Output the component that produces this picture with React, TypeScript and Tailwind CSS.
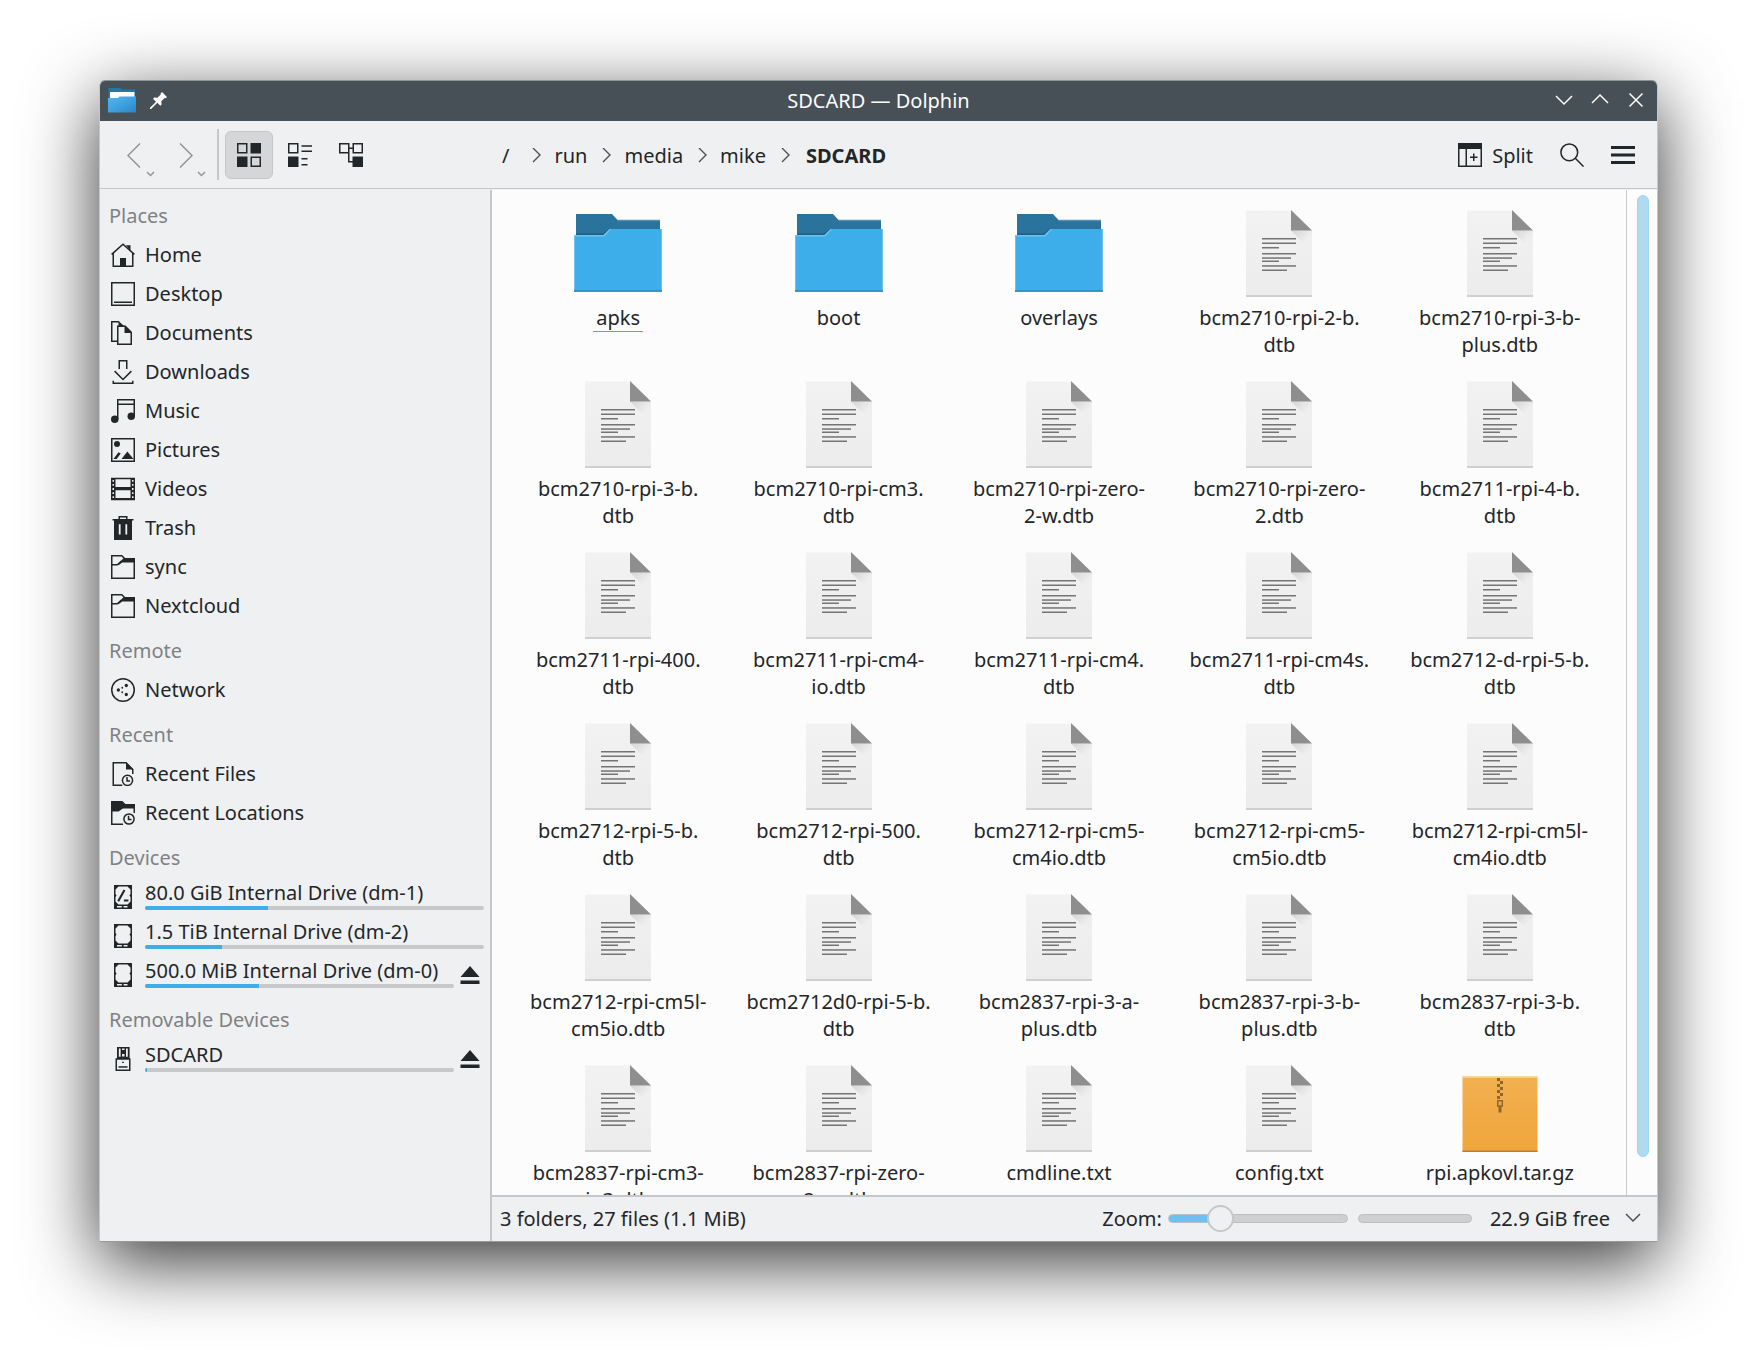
import type { ReactNode } from 'react';

type Place = {
  label: string;
  icon: ReactNode;
  usage?: number;
  ejectable?: boolean;
};

type PlaceGroup = {
  title: string;
  items: Place[];
};

type FileItem = {
  name: string;
  kind: 'folder' | 'text' | 'archive';
  current?: boolean;
};

const Glyph = ({ children }: { children: ReactNode }) => (
  <svg viewBox="0 0 16 16" className="size-6 shrink-0 fill-none stroke-[#232629]" aria-hidden="true">
    {children}
  </svg>
);

const solid = 'fill-[#232629] stroke-none';
const paper = 'fill-[#eff0f1] stroke-none';

const HomeIcon = () => (
  <Glyph>
    <path d="M.4 7.6 8 .8l7.6 6.8M1.5 6.6v8.9h13V6.6" />
    <path className={solid} d="M6 10h4v5.5H6zM10 1.5h3V5z" />
  </Glyph>
);

const DesktopIcon = () => (
  <Glyph>
    <path d="M.5.5h15v15H.5zM2 13.5h12" />
  </Glyph>
);

const DocumentsIcon = () => (
  <Glyph>
    <path d="M4.5 13.5h-4V.5h5M4.5 3.5h5l4 4v8h-9z" />
    <path className={solid} d="M5 0l4.5 4H5zM9 3l5 5H9z" />
  </Glyph>
);

const DownloadsIcon = () => (
  <Glyph>
    <path d="M5.5 6V.5h5V6M2.4 7.4 8 13l5.6-5.6M1.5 13.8v1.7h13v-1.7" />
  </Glyph>
);

const MusicIcon = () => (
  <Glyph>
    <path d="M4.5 13.5V.5h11v11M4.5 3.5h11" />
    <circle className={solid} cx="2.5" cy="13.5" r="2.5" />
    <circle className={solid} cx="13.5" cy="11.5" r="2.5" />
  </Glyph>
);

const PicturesIcon = () => (
  <Glyph>
    <path d="M.5.5h15v15H.5z" />
    <circle className={solid} cx="4" cy="4" r="2" />
    <path className={solid} d="M7 14l3.9-5L15 14zM1.6 14l3.4-4.5 1.5.8L3.8 14z" />
  </Glyph>
);

const VideosIcon = () => (
  <Glyph>
    <path className={solid} d="M0 .5h16v15H0z" />
    <path className={paper} d="M3 1.5h10v5.2H3zM3 8.8h10v5.2H3z" />
    <path className="stroke-[#eff0f1]" strokeDasharray="1.2 1.5" d="M1.5 2v13M14.5 2v13" />
  </Glyph>
);

const TrashIcon = () => (
  <Glyph>
    <path d="M5.5 2.5v-2h5v2M1 2.5h14" />
    <path className={solid} d="M2 2.5h12V16H2z" />
    <path className={paper} d="M5.2 5.5h1.2v6.8H5.2zM9.6 5.5h1.2v6.8H9.6z" />
  </Glyph>
);

const FolderIcon = () => (
  <Glyph>
    <path d="M.5.5h6.7l2 2h6.3v13H.5zM.5 6.5h3.7L7 4" />
    <path className={solid} d="M8.5 2H16v3H7.5L5 6.8 4.5 6z" />
  </Glyph>
);

const NetworkIcon = () => (
  <Glyph>
    <circle cx="8" cy="8" r="7.5" />
    <g className={solid}>
      <circle cx="4.9" cy="8" r="1.1" />
      <circle cx="10.2" cy="5" r="1.1" />
      <circle cx="10.2" cy="11" r="1.1" />
      <circle cx="7.5" cy="6.5" r=".6" />
      <circle cx="7.5" cy="9.5" r=".6" />
    </g>
  </Glyph>
);

const RecentFilesIcon = () => (
  <Glyph>
    <path d="M7.5 15.5h-6V.5H10l4.5 4.5v3" />
    <path className={solid} d="M10 0l5 5h-5z" />
    <circle cx="11" cy="12.2" r="3.4" />
    <path d="M10.7 10v2.6h2" />
  </Glyph>
);

const RecentLocationsIcon = () => (
  <Glyph>
    <path d="M8 15.5H.5V.5M15.5 3v5" />
    <path className={solid} d="M0 0h7.6l2 2H16v3H8L5 7H0z" />
    <circle cx="12" cy="12" r="3.4" />
    <path d="M11.7 9.8v2.6h2" />
  </Glyph>
);

const DriveIcon = ({ root = false }: { root?: boolean }) => (
  <Glyph>
    <path className={solid} d="M2 0h12v16H2z" />
    <path className={paper} d="M5 1h6l2 2v3l-.7 1 .7 1v3l-2 2H5l-2-2V8l.7-1L3 6V3z" />
    <path className={paper} d="M4 14h3.2v1H4zM8.4 14h2.6v1H8.4z" />
    {root && <path className="stroke-[1.4]" d="M4.8 10.8 9 3.4M8.6 10.3h3" />}
  </Glyph>
);

const UsbIcon = () => (
  <Glyph>
    <path className={solid} d="M4 0h8.4v8H4z" />
    <path className={paper} d="M5.2 1h1.2v5.5H5.2zM10 1h1.2v5.5H10zM7.4 4.6h1.6v1.8H7.4zM7.4 1h1.6v1H7.4z" />
    <path className="fill-[#eff0f1]" d="M3.5 8h9v7.5h-9z" />
    <path d="M5 13.3h6" />
    <path className={solid} d="M7.4 9.8h1.2v.8H7.4z" />
  </Glyph>
);

const EjectIcon = () => (
  <svg viewBox="0 0 20 20" className="size-5 fill-[#232629]" aria-hidden="true">
    <path d="M10 1l9.5 11H.5zM.5 15.5h19V19H.5z" />
  </svg>
);

const FolderPicture = () => (
  <svg viewBox="0 0 96 96" className="size-24" aria-hidden="true">
    <path className="fill-[#29739d]" d="M6 8h36l5.500 6H90v20H6z" />
    <path className="fill-[#5392b5]" d="M46.500 13.800H90v1.500H48z" />
    <path className="fill-[#205e83]" d="M6 27.500h27l6-5v7H6z" />
    <path className="fill-[#3daee9]" d="M4 29h29.500l6-6H92v62.700H4z" />
    <path className="fill-[#6fc2ee]" d="M4 29h29.500l6-6H41l-6.500 7.500H5v54H4zM91 23h1v61.500h-1z" />
    <path className="fill-[#2f89ba]" d="M4 84.300h88v1.500H4z" />
  </svg>
);

const textLines = [
  [32, 34],
  [36.5, 34],
  [41, 17],
  [47, 34],
  [51.3, 29],
  [54.5, 17],
  [59.2, 34],
  [63.5, 25],
];

const TextPicture = () => (
  <svg viewBox="0 0 96 96" className="size-24" aria-hidden="true">
    <defs>
      <linearGradient id="sheet" x1="0" y1="0" x2="0" y2="1">
        <stop offset="0" stopColor="#f2f2f2" />
        <stop offset="1" stopColor="#ececec" />
      </linearGradient>
      <linearGradient id="fold-shade" x1="0" y1="0" x2="1" y2="1">
        <stop offset="0" stopColor="#d4d4d4" />
        <stop offset=".6" stopColor="#efefef" />
      </linearGradient>
    </defs>
    <path fill="url(#sheet)" d="M15 4.500h45l21 21V91H15z" />
    <path fill="url(#fold-shade)" d="M60 24.500h21v21z" />
    <path className="fill-[#8e8e8e]" d="M60 4l21 20.500H60z" />
    <path className="fill-[#c6c6c6]" d="M15 89.300h66v1.500H15z" />
    {textLines.map(([y, width]) => (
      <rect key={y} className="fill-[#747474]" x="31" y={y} width={width} height="1.5" />
    ))}
  </svg>
);

const ArchivePicture = () => (
  <svg viewBox="0 0 96 96" className="size-24" aria-hidden="true">
    <defs>
      <linearGradient id="box" x1="0" y1="0" x2="0" y2="1">
        <stop offset="0" stopColor="#f2b050" />
        <stop offset="1" stopColor="#efa63b" />
      </linearGradient>
    </defs>
    <path fill="url(#box)" d="M10.500 15h75v76h-75z" />
    <path className="fill-[#f9d7a6]" d="M10.500 15h75v1.800h-75z" />
    <path className="fill-[#b57d2c]" d="M10.500 89.500h75V91h-75z" />
    <path
      className="fill-[#8d672f]"
      d="M45 17h3v3h-3zM48 20h3v3h-3zM45 23h3v3h-3zM48 26h3v3h-3zM45 29h3v3h-3zM48 32h3v3h-3zM45 35h3v3h-3z"
    />
    <path className="fill-none stroke-[#8d672f] stroke-[1.5]" d="M45.800 39.800h4.500V45h-4.500z" />
    <path className="fill-[#8d672f]" d="M46.500 45h3v6.500h-3z" />
  </svg>
);

const AppIcon = () => (
  <svg viewBox="0 0 28 26" className="h-[26px] w-7" aria-hidden="true">
    <defs>
      <linearGradient id="app-folder" x1="0" y1="0" x2="1" y2="1">
        <stop offset="0" stopColor="#4fb8f2" />
        <stop offset=".6" stopColor="#3a9ddb" />
        <stop offset="1" stopColor="#2d84bd" />
      </linearGradient>
    </defs>
    <path className="fill-[#2378a8]" d="M.500 1h12l1.500 1.500h13V14H.500z" />
    <path className="fill-[#fcfcfc]" d="M2 5h24.500v6H2z" />
    <path fill="url(#app-folder)" d="M0 11h10l1.500-1.500H28V25.500H0z" />
  </svg>
);

const PinIcon = () => (
  <svg viewBox="0 0 17 17" className="size-[17px] fill-[#fcfcfc]" aria-hidden="true">
    <path d="M12 0l5 5-1.500 1.200-.8-.3-3.400 3.400.3 3.200-1.300 1.300-3-3L1.200 17H0v-1.200l6-6.100-3-3 1.300-1.300 3.200.3 3.400-3.400-.3-.8z" />
  </svg>
);

const placeGroups: PlaceGroup[] = [
  {
    title: 'Places',
    items: [
      { label: 'Home', icon: <HomeIcon /> },
      { label: 'Desktop', icon: <DesktopIcon /> },
      { label: 'Documents', icon: <DocumentsIcon /> },
      { label: 'Downloads', icon: <DownloadsIcon /> },
      { label: 'Music', icon: <MusicIcon /> },
      { label: 'Pictures', icon: <PicturesIcon /> },
      { label: 'Videos', icon: <VideosIcon /> },
      { label: 'Trash', icon: <TrashIcon /> },
      { label: 'sync', icon: <FolderIcon /> },
      { label: 'Nextcloud', icon: <FolderIcon /> },
    ],
  },
  { title: 'Remote', items: [{ label: 'Network', icon: <NetworkIcon /> }] },
  {
    title: 'Recent',
    items: [
      { label: 'Recent Files', icon: <RecentFilesIcon /> },
      { label: 'Recent Locations', icon: <RecentLocationsIcon /> },
    ],
  },
  {
    title: 'Devices',
    items: [
      { label: '80.0 GiB Internal Drive (dm-1)', icon: <DriveIcon root />, usage: 36.3 },
      { label: '1.5 TiB Internal Drive (dm-2)', icon: <DriveIcon />, usage: 22.6 },
      { label: '500.0 MiB Internal Drive (dm-0)', icon: <DriveIcon />, usage: 37, ejectable: true },
    ],
  },
  {
    title: 'Removable Devices',
    items: [{ label: 'SDCARD', icon: <UsbIcon />, usage: 0.6, ejectable: true }],
  },
];

// Long names carry their own line break, after a dash or a dot.
const files: FileItem[] = [
  { name: 'apks', kind: 'folder', current: true },
  { name: 'boot', kind: 'folder' },
  { name: 'overlays', kind: 'folder' },
  { name: 'bcm2710-rpi-2-b.\ndtb', kind: 'text' },
  { name: 'bcm2710-rpi-3-b-\nplus.dtb', kind: 'text' },
  { name: 'bcm2710-rpi-3-b.\ndtb', kind: 'text' },
  { name: 'bcm2710-rpi-cm3.\ndtb', kind: 'text' },
  { name: 'bcm2710-rpi-zero-\n2-w.dtb', kind: 'text' },
  { name: 'bcm2710-rpi-zero-\n2.dtb', kind: 'text' },
  { name: 'bcm2711-rpi-4-b.\ndtb', kind: 'text' },
  { name: 'bcm2711-rpi-400.\ndtb', kind: 'text' },
  { name: 'bcm2711-rpi-cm4-\nio.dtb', kind: 'text' },
  { name: 'bcm2711-rpi-cm4.\ndtb', kind: 'text' },
  { name: 'bcm2711-rpi-cm4s.\ndtb', kind: 'text' },
  { name: 'bcm2712-d-rpi-5-b.\ndtb', kind: 'text' },
  { name: 'bcm2712-rpi-5-b.\ndtb', kind: 'text' },
  { name: 'bcm2712-rpi-500.\ndtb', kind: 'text' },
  { name: 'bcm2712-rpi-cm5-\ncm4io.dtb', kind: 'text' },
  { name: 'bcm2712-rpi-cm5-\ncm5io.dtb', kind: 'text' },
  { name: 'bcm2712-rpi-cm5l-\ncm4io.dtb', kind: 'text' },
  { name: 'bcm2712-rpi-cm5l-\ncm5io.dtb', kind: 'text' },
  { name: 'bcm2712d0-rpi-5-b.\ndtb', kind: 'text' },
  { name: 'bcm2837-rpi-3-a-\nplus.dtb', kind: 'text' },
  { name: 'bcm2837-rpi-3-b-\nplus.dtb', kind: 'text' },
  { name: 'bcm2837-rpi-3-b.\ndtb', kind: 'text' },
  { name: 'bcm2837-rpi-cm3-\nio3.dtb', kind: 'text' },
  { name: 'bcm2837-rpi-zero-\n2-w.dtb', kind: 'text' },
  { name: 'cmdline.txt', kind: 'text' },
  { name: 'config.txt', kind: 'text' },
  { name: 'rpi.apkovl.tar.gz', kind: 'archive' },
];

const crumbs = ['run', 'media', 'mike'];

const TitleBar = () => (
  <header className="grid h-10 shrink-0 grid-cols-[1fr_auto_1fr] items-center bg-[#475057] px-2 pb-[2px] text-[#fcfcfc]">
    <div className="flex items-center gap-[14px]">
      <AppIcon />
      <button type="button" aria-label="Keep on all desktops">
        <PinIcon />
      </button>
    </div>
    <h1>SDCARD — Dolphin</h1>
    <div className="flex justify-end gap-3 pr-px">
      <button type="button" aria-label="Minimize">
        <svg viewBox="0 0 24 24" className="size-6 fill-none stroke-current stroke-[1.5]">
          <path d="M4 8l8 8 8-8" />
        </svg>
      </button>
      <button type="button" aria-label="Maximize">
        <svg viewBox="0 0 24 24" className="size-6 fill-none stroke-current stroke-[1.5]">
          <path d="M4 15l8-8 8 8" />
        </svg>
      </button>
      <button type="button" aria-label="Close">
        <svg viewBox="0 0 24 24" className="size-6 fill-none stroke-current stroke-[1.5]">
          <path d="M5.500 5.500l13 13M18.500 5.500l-13 13" />
        </svg>
      </button>
    </div>
  </header>
);

const toolButton = 'flex size-12 items-center justify-center rounded-md';

const CrumbArrow = () => (
  <svg viewBox="0 0 10 16" className="mr-3 ml-[15px] h-4 w-[10px] fill-none stroke-[#4d5052] stroke-[1.4]" aria-hidden="true">
    <path d="M1 0l7 7-7 7" />
  </svg>
);

const ToolBar = () => (
  <div className="flex h-[68px] shrink-0 items-center border-b border-[#c4c8ca] pr-[10px]">
    <div className="flex w-[393px] items-center gap-[3px] pl-3">
      <button type="button" aria-label="Back" className="size-12">
        <svg viewBox="0 0 48 48" className="size-12 fill-none stroke-[#929597] stroke-[1.5]">
          <path d="M28 12.500 16 24.500l12 12" />
          <path d="M35 41l3.500 3.500L42 41" />
        </svg>
      </button>
      <button type="button" aria-label="Forward" className="size-12">
        <svg viewBox="0 0 48 48" className="size-12 fill-none stroke-[#929597] stroke-[1.5]">
          <path d="M17 12.500l12 12-12 12" />
          <path d="M35 41l3.500 3.500L42 41" />
        </svg>
      </button>
      <div className="mx-[3px] h-[51px] w-[2px] bg-[#c4c8ca]" />
      <button type="button" aria-label="Icons" aria-pressed="true" className="flex size-12 items-center justify-center rounded-md border border-[#c4c6c8] bg-[#d5d6d8]">
        <Glyph>
          <path d="M.5.5h6v6h-6zM9.500 9.500h6v6h-6z" />
          <path className={solid} d="M9 0h7v7H9zM0 9h7v7H0z" />
        </Glyph>
      </button>
      <button type="button" aria-label="Compact" className={toolButton}>
        <Glyph>
          <path d="M.5.5h6v6h-6zM9 2h7M9 5.500h7M9 10.500h4M9 14.500h4" />
          <path className={solid} d="M0 9h7v7H0z" />
        </Glyph>
      </button>
      <button type="button" aria-label="Details" className={toolButton}>
        <Glyph>
          <path d="M.5.5h6v6h-6zM9.500.5h6v6h-6zM6.500 3.500h3M6.500 6.500v6H10" />
          <path className={solid} d="M9 9h7v7H9z" />
        </Glyph>
      </button>
    </div>
    <nav aria-label="Location" className="flex items-center pt-[2px] pl-[9px]">
      <a href="#root" className="pr-2">/</a>
      {crumbs.map((crumb) => (
        <span key={crumb} className="flex items-center">
          <CrumbArrow />
          <a href={`#${crumb}`}>{crumb}</a>
        </span>
      ))}
      <CrumbArrow />
      <a href="#sdcard" className="pl-[3px] font-bold">SDCARD</a>
    </nav>
    <div className="ml-auto flex items-center gap-[3px]">
      <button type="button" className="flex h-12 items-center gap-[10px] px-3">
        <Glyph>
          <path d="M.5.5h15v15H.5zM5.500 4v12M8 9.500h5M10.500 7v5" />
          <path className={solid} d="M0 0h16v4H0z" />
        </Glyph>
        <span className="pt-[2px]">Split</span>
      </button>
      <button type="button" aria-label="Search" className={toolButton}>
        <Glyph>
          <circle cx="6.200" cy="6.200" r="5.600" />
          <path d="M10.200 10.200l5.500 5.500" />
        </Glyph>
      </button>
      <button type="button" aria-label="Open menu" className={toolButton}>
        <Glyph>
          <path className={solid} d="M0 2h16v2H0zM0 7h16v2H0zM0 12h16v2H0z" />
        </Glyph>
      </button>
    </div>
  </div>
);

const PlaceRow = ({ label, icon, usage, ejectable }: Place) => (
  <li className="flex h-[39px] items-center pr-[6px] pl-[11px]">
    <a href="#place" className="flex h-full min-w-0 flex-1 items-center gap-[10px]">
      {icon}
      {usage === undefined ? (
        label
      ) : (
        <span className="flex flex-1 flex-col pb-[3px]">
          <span className="leading-[26px] whitespace-nowrap">{label}</span>
          <span className="block h-1 overflow-hidden rounded-xs bg-[#c6c8ca]">
            <span className="block h-full bg-[#3daee9]" style={{ width: `${usage}%` }} />
          </span>
        </span>
      )}
    </a>
    {ejectable && (
      <button type="button" aria-label={`Eject ${label}`} className="mr-1 ml-[6px]">
        <EjectIcon />
      </button>
    )}
  </li>
);

const Sidebar = () => (
  <aside className="w-[392px] shrink-0 border-r-2 border-[#c4c8ca]">
    {placeGroups.map((group) => (
      <section key={group.title}>
        <h2 className="h-[45px] pt-3 pl-[9px] text-[#7f8284]">{group.title}</h2>
        <ul>
          {group.items.map((item) => (
            <PlaceRow key={item.label} {...item} />
          ))}
        </ul>
      </section>
    ))}
  </aside>
);

const FileTile = ({ name, kind, current }: FileItem) => (
  <a href="#file" className="flex h-[171px] flex-col items-center gap-[2px] text-center">
    {kind === 'folder' && <FolderPicture />}
    {kind === 'text' && <TextPicture />}
    {kind === 'archive' && <ArchivePicture />}
    <span className={current ? 'border-b border-[#3daee9] px-[3px]' : 'whitespace-pre-line'}>{name}</span>
  </a>
);

const StatusBar = () => (
  <footer className="flex h-[46px] shrink-0 items-center border-t-2 border-[#c4c8ca] pr-4 pb-[2px] pl-2">
    <span>3 folders, 27 files (1.1 MiB)</span>
    <label htmlFor="zoom" className="ml-auto">Zoom:</label>
    <input
      id="zoom"
      type="range"
      min="0"
      max="100"
      defaultValue="25"
      className="ml-[6px] h-7 w-[180px] appearance-none bg-transparent [&::-webkit-slider-runnable-track]:h-[9px] [&::-webkit-slider-runnable-track]:rounded-full [&::-webkit-slider-runnable-track]:border [&::-webkit-slider-runnable-track]:border-[#bcbfc1] [&::-webkit-slider-runnable-track]:bg-[linear-gradient(to_right,#6cc1ee_30%,#cdcfd1_30%)] [&::-webkit-slider-thumb]:-mt-[10px] [&::-webkit-slider-thumb]:size-[27px] [&::-webkit-slider-thumb]:appearance-none [&::-webkit-slider-thumb]:rounded-full [&::-webkit-slider-thumb]:border-2 [&::-webkit-slider-thumb]:border-[#c4c8ca] [&::-webkit-slider-thumb]:bg-[#eff0f1]"
    />
    <div className="ml-[10px] h-[9px] w-[114px] rounded-full border border-[#bcbfc1] bg-[#cdcfd1]" />
    <button type="button" className="ml-[18px] flex items-center gap-[15px]">
      22.9 GiB free
      <svg viewBox="0 0 16 10" className="h-[10px] w-4 fill-none stroke-[#4d5052] stroke-[1.5]" aria-hidden="true">
        <path d="M1 1l7 7 7-7" />
      </svg>
    </button>
  </footer>
);

const App = () => (
  <div className="h-screen bg-white pt-20 pr-[97px] pb-[115px] pl-[99px] font-['Noto_Sans',sans-serif] text-[20px] leading-[27px] text-[#232629]">
    <div className="flex h-full flex-col overflow-hidden rounded-t-md border border-[#c4c8ca] border-t-[#8c9498] border-b-[#989b9d] bg-[#eff0f1] shadow-[0_20px_72px_rgba(0,0,0,0.8)]">
      <TitleBar />
      <ToolBar />
      <div className="flex min-h-0 flex-1 pt-px">
        <Sidebar />
        <div className="flex min-w-0 flex-1 flex-col">
          <main className="flex min-h-0 flex-1 overflow-hidden bg-[#fcfcfc]">
            <div className="grid flex-1 grid-cols-5 content-start px-4 pt-4">
              {files.map((file) => (
                <FileTile key={file.name} {...file} />
              ))}
            </div>
            <div className="flex w-[31px] flex-col border-l border-[#c9cccd] pt-[5px] pr-2 pb-[38px] pl-[10px]">
              <div className="flex-1 rounded-full border border-[#a3d4ef] bg-[#b0daf0]" />
            </div>
          </main>
          <StatusBar />
        </div>
      </div>
    </div>
  </div>
);

export default App;
